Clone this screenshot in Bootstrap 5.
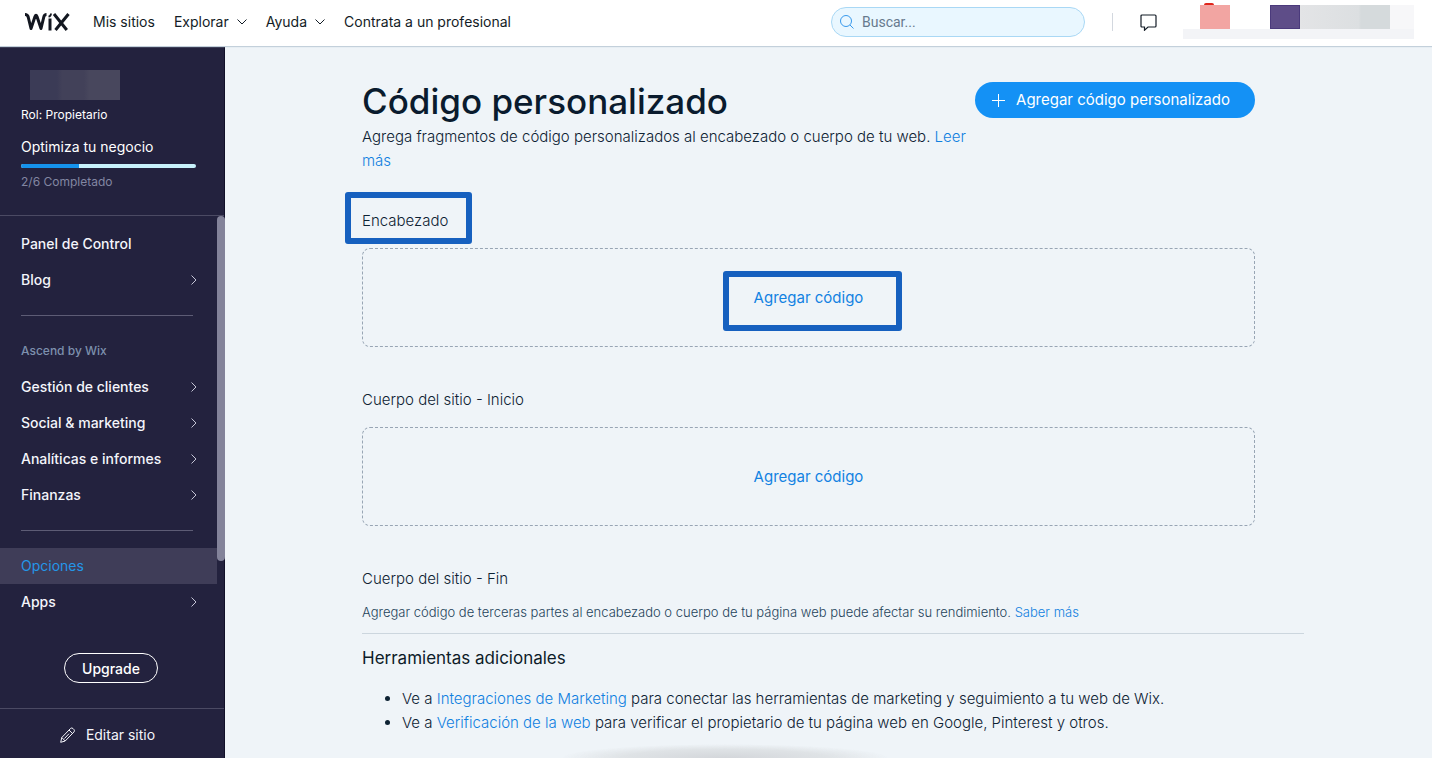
<!DOCTYPE html>
<html lang="es">
<head>
<meta charset="utf-8">
<meta name="viewport" content="width=device-width, initial-scale=1">
<title>Código personalizado | Wix</title>
<link href="https://cdn.jsdelivr.net/npm/bootstrap@5.3.0/dist/css/bootstrap.min.css" rel="stylesheet">
<style>
  body { font-family: Inter, "Liberation Sans", Arial, sans-serif; font-size: 15px; font-weight: 300; line-height: 24px; color: #0d2233; background: #eff4f8; }
  a { color: #0f80e0; text-decoration: none; }
  .topbar, .sidebar { font-size: 14px; font-weight: 400; }
  .topbar { height: 46px; padding-bottom: 2px; z-index: 2; box-shadow: 0 1px 1px #c3d0db; }
  .topbar a { color: #131c26; }
  .topbar-menu { gap: 19px; margin-left: 23px; line-height: 22px; }
  .brand { margin-left: 24px; }
  .searchbox { width: 254px; height: 30px; color: #3899ec; background: #e9f7ff; border: 1px solid #a9d8f5; }
  .searchbox input { font-family: Roboto, sans-serif; font-size: 14px; color: #3b5671; outline: 0; }
  .searchbox input::placeholder { color: #667a8e; opacity: 1; }
  .vsep { width: 1px; height: 18px; margin-left: 27px; background: #d3d8df; }
  .chat { margin: 0 26px 0 27px; }
  .account { width: 231px; height: 34px; margin-right: 18px; background: linear-gradient(#fff 24px, #f3f4f7 24px); }
  .account > span { height: 24px; }
  .acc-bell { width: 30px; margin-left: 17px; background: #f2a5a2; }
  .acc-dot { width: 10px; height: 2px; left: 4px; bottom: 100%; background: #e0251b; border-radius: 5px 5px 0 0; }
  .acc-photo { width: 30px; margin-left: 40px; background: #5e4d88; border: 1px solid #4b3a7c; }
  .acc-name { width: 90px; background: linear-gradient(90deg, #e3e4e6, #dcdfe1 65%, #d5dadc 68%); }
  .acc-rest { background: #f7f7f9; }
  .sidebar { width: 225px; background: #23223e; border-right: 1px solid #111029; color: #fff; }
  .sidebar a { color: #f4f5fb; }
  .site-head { height: 170px; padding: 24px 28px 0 21px; border-bottom: 1px solid #4b4a63; }
  .site-name { width: 90px; height: 30px; margin-left: 9px; background: linear-gradient(90deg, #3b3b56 30%, #424159 36%, #424159 60%, #48475d 66%); }
  .fine { font-size: 12px; line-height: 20px; }
  .steps { height: 4px; background: #c7f1fb; border-radius: 2px; }
  .steps .progress-bar { background: #1592ec; }
  .dim { color: #8286a2; }
  .side-nav { padding-top: 10px; }
  .side-nav .nav-link { height: 36px; padding: 0 27px 0 21px; font-weight: 500; }
  .side-nav .nav-link.active { color: #2496e8; background: #3f3d58; margin-right: 7px; font-weight: 400; }
  .side-nav hr { margin: 17px 31px 17px 21px; border-color: #5d5c75; opacity: 1; }
  .side-title { height: 36px; padding-left: 21px; font-size: 12px; font-weight: 500; color: #7d90ad; }
  .thumb { width: 8px; height: 345px; top: 0; right: -1px; background: #83839a; border-radius: 4px; }
  .upgrade { width: 94px; height: 30px; margin: 33px 0 24px 64px; padding: 0; font-size: 14px; font-weight: 500; border: 1px solid #fff; color: #fff; }
  .edit-site { height: 50px; gap: 11px; padding: 2px 9px 0 0; border-top: 1px solid #4b4a63; }
  .content { padding: 35px 128px 20px 137px; }
  .panel { margin-right: 49px; }
  h1 { font-size: 35px; line-height: 40px; margin: 0 0 4px; color: #0a1b2e; font-weight: 500; }
  .intro { max-width: 613px; }
  .add-main { height: 36px; width: 280px; margin-top: 1px; font-size: 15px; font-weight: 400; color: #fff; background: #1491f5; padding: 1px 8px 0 0; gap: 10px; }
  .block-label { font-size: 15px; line-height: 24px; margin: 0 0 15px; font-weight: 300; color: #0d2233; }
  .dropzone { height: 99px; padding-top: 2px; border: 1px dashed #98a5b4; border-radius: 8px; margin-bottom: 41px; }
  .add-code { color: #1282e2; padding: 0; border: 0; font-size: 15px; }
  .framed::after { content: ""; position: absolute; border: 6px solid #1660bf; border-radius: 3px; pointer-events: none; }
  .frame-label::after { inset: -17px -24px -11px -17px; }
  .frame-button::after { inset: -16px -39px -21px -31px; }
  .note { font-size: 13px; line-height: 20px; color: #24435a; margin: 0 0 11px; }
  .content hr { margin: 0 0 12px; border-color: #ccd6de; opacity: 1; }
  h2 { font-size: 17px; line-height: 24px; margin: 0 0 17px; color: #0d1b28; font-weight: 400; }
  .links { padding-left: 40px; margin: 0; }
  .dock-shade { position: fixed; left: 50%; bottom: 0; width: 330px; height: 14px; margin-left: -156px; background: radial-gradient(ellipse at bottom, #d3d6da 0%, #dfe3e6 45%, transparent 70%); }
</style>
</head>
<body class="d-flex flex-column min-vh-100">
<header class="topbar d-flex align-items-center bg-white position-relative">
  <a href="#" aria-label="Wix" class="brand d-flex">
    <svg width="46" height="18" viewBox="0 0 46 18" fill="none" stroke="#131720" stroke-width="3" stroke-linejoin="round"><path d="M1 1.500Q3.500 1.500 4.200 4L7 15.500L11 3.500Q12 1 13 3.500L17 15.500L19.800 4Q20.400 1.500 22.500 1.500"/><path d="M26 5.500V17.500"/><path d="M24.500 3.700Q27 3.300 27 .500" stroke-width="1.800"/><path d="M30 1 42.800 17M44.500 1 31.500 17"/></svg>
  </a>
  <nav class="topbar-menu d-flex align-items-center">
    <a href="#">Mis sitios</a>
    <a href="#" class="d-flex align-items-center gap-2">Explorar <svg width="10" height="6" viewBox="0 0 10 6" fill="none" stroke="currentColor"><path d="M.5.500 5 5 9.500.500"/></svg></a>
    <a href="#" class="d-flex align-items-center gap-2">Ayuda <svg width="10" height="6" viewBox="0 0 10 6" fill="none" stroke="currentColor"><path d="M.5.500 5 5 9.500.500"/></svg></a>
    <a href="#">Contrata a un profesional</a>
  </nav>
  <label class="searchbox d-flex align-items-center rounded-pill ms-auto px-2 gap-2">
    <svg width="14" height="14" viewBox="0 0 14 14" fill="none" stroke="currentColor" class="flex-shrink-0"><circle cx="6" cy="6" r="5.500"/><path d="m10 10 3.500 3.500"/></svg>
    <input type="search" class="border-0 bg-transparent p-0 w-100" placeholder="Buscar..." aria-label="Buscar">
  </label>
  <div class="vsep"></div>
  <a href="#" aria-label="Mensajes" class="chat d-flex"><svg width="17" height="17" viewBox="0 0 17 17" fill="none" stroke="currentColor" stroke-width="1.200"><path d="M2 1H15Q16 1 16 2V12Q16 13 15 13H8L4.500 16.200V13H2Q1 13 1 12V2Q1 1 2 1Z"/></svg></a>
  <div class="account d-flex">
    <span class="acc-bell position-relative"><i class="acc-dot position-absolute"></i></span>
    <span class="acc-photo"></span><span class="acc-name ms-auto"></span><span class="acc-rest flex-grow-1"></span>
  </div>
</header>
<div class="d-flex flex-grow-1">
  <aside class="sidebar d-flex flex-column flex-shrink-0">
    <div class="site-head">
      <div class="site-name"></div>
      <div class="fine" style="margin-top:5px">Rol: Propietario</div>
      <div style="margin-top:10px">Optimiza tu negocio</div>
      <div class="progress steps" role="progressbar" aria-label="Pasos completados" aria-valuenow="2" aria-valuemin="0" aria-valuemax="6" style="margin-top:5px"><div class="progress-bar" style="width:33.3%"></div></div>
      <div class="fine dim mt-1">2/6 Completado</div>
    </div>
    <div class="position-relative flex-grow-1 d-flex flex-column">
      <div class="thumb position-absolute"></div>
      <nav class="side-nav nav flex-column flex-nowrap">
        <a class="nav-link d-flex align-items-center" href="#">Panel de Control</a>
        <a class="nav-link d-flex align-items-center justify-content-between" href="#">Blog <svg width="6" height="10" viewBox="0 0 6 10" fill="none" stroke="#c5c5d6"><path d="M.5.500 5 5 .5 9.500"/></svg></a>
        <hr>
        <div class="side-title d-flex align-items-center">Ascend by Wix</div>
        <a class="nav-link d-flex align-items-center justify-content-between" href="#">Gestión de clientes <svg width="6" height="10" viewBox="0 0 6 10" fill="none" stroke="#c5c5d6"><path d="M.5.500 5 5 .5 9.500"/></svg></a>
        <a class="nav-link d-flex align-items-center justify-content-between" href="#">Social &amp; marketing <svg width="6" height="10" viewBox="0 0 6 10" fill="none" stroke="#c5c5d6"><path d="M.5.500 5 5 .5 9.500"/></svg></a>
        <a class="nav-link d-flex align-items-center justify-content-between" href="#">Analíticas e informes <svg width="6" height="10" viewBox="0 0 6 10" fill="none" stroke="#c5c5d6"><path d="M.5.500 5 5 .5 9.500"/></svg></a>
        <a class="nav-link d-flex align-items-center justify-content-between" href="#">Finanzas <svg width="6" height="10" viewBox="0 0 6 10" fill="none" stroke="#c5c5d6"><path d="M.5.500 5 5 .5 9.500"/></svg></a>
        <hr>
        <a class="nav-link active d-flex align-items-center" aria-current="page" href="#">Opciones</a>
        <a class="nav-link d-flex align-items-center justify-content-between" href="#">Apps <svg width="6" height="10" viewBox="0 0 6 10" fill="none" stroke="#c5c5d6"><path d="M.5.500 5 5 .5 9.500"/></svg></a>
      </nav>
      <button type="button" class="btn upgrade rounded-pill">Upgrade</button>
    </div>
    <a href="#" class="edit-site d-flex align-items-center justify-content-center">
      <svg width="15" height="16" viewBox="0 0 15 16" fill="none" stroke="currentColor" stroke-linejoin="round"><path d="M.7 15.300 1.800 10.500 10.600 1.400Q11.800.400 13.100 1.600L13.900 2.500Q15 3.700 14 4.900L5.200 14Z M9 3 12.400 6.500M1.800 10.500 5.200 14M4.500 11.500 9 6.700"/></svg>
      Editar sitio</a>
  </aside>
  <main class="content flex-grow-1">
    <div class="panel">
      <div class="d-flex justify-content-between align-items-start">
        <div class="intro">
          <h1>Código personalizado</h1>
          <p class="mb-0">Agrega fragmentos de código personalizados al encabezado o cuerpo de tu web. <a href="#">Leer más</a></p>
        </div>
        <button type="button" class="btn add-main rounded-pill flex-shrink-0 d-flex align-items-center justify-content-center"><svg width="14" height="14" viewBox="0 0 14 14" stroke="#fff"><path d="M0 6.500H13M6.500 0V13"/></svg>Agregar código personalizado</button>
      </div>
      <h3 class="block-label" style="margin-top:36px"><span class="framed frame-label position-relative d-inline-block">Encabezado</span></h3>
      <div class="dropzone d-flex align-items-center justify-content-center"><button type="button" class="btn add-code framed frame-button position-relative">Agregar código</button></div>
      <h3 class="block-label">Cuerpo del sitio - Inicio</h3>
      <div class="dropzone d-flex align-items-center justify-content-center"><button type="button" class="btn add-code">Agregar código</button></div>
      <h3 class="block-label" style="margin-bottom:11px">Cuerpo del sitio - Fin</h3>
      <p class="note">Agregar código de terceras partes al encabezado o cuerpo de tu página web puede afectar su rendimiento. <a href="#">Saber más</a></p>
    </div>
    <hr>
    <h2>Herramientas adicionales</h2>
    <ul class="links">
      <li>Ve a <a href="#">Integraciones de Marketing</a> para conectar las herramientas de marketing y seguimiento a tu web de Wix.</li>
      <li>Ve a <a href="#">Verificación de la web</a> para verificar el propietario de tu página web en Google, Pinterest y otros.</li>
    </ul>
  </main>
</div>
<div class="dock-shade"></div>
<script src="https://cdn.jsdelivr.net/npm/bootstrap@5.3.0/dist/js/bootstrap.bundle.min.js"></script>
</body>
</html>
